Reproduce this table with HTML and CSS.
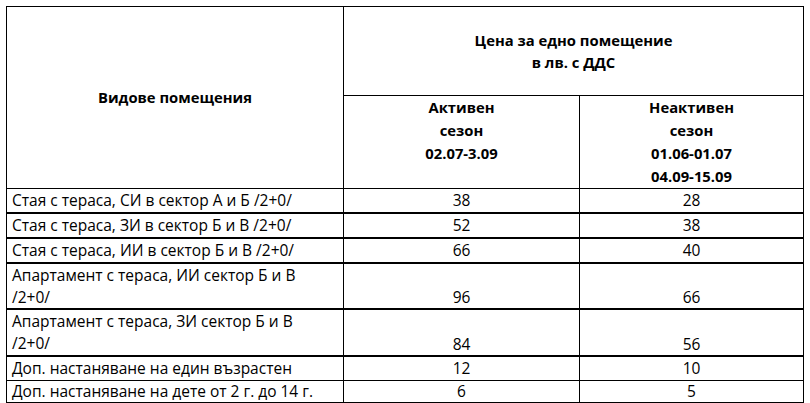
FILE: index.html
```html
<!DOCTYPE html>
<html lang="bg">
<head>
<meta charset="utf-8">
<title>Цени</title>
<link rel="stylesheet" href="styles.css">
</head>
<body>
<div class="page">
<table class="prices">
  <colgroup>
    <col class="c-type">
    <col class="c-active">
    <col class="c-inactive">
  </colgroup>
  <tr class="h1">
    <th rowspan="2" class="type-head">Видове помещения</th>
    <th colspan="2" class="price-head">Цена за едно помещение<br>в лв. с ДДС</th>
  </tr>
  <tr class="h2">
    <th class="season">Активен<br>сезон<br>02.07-3.09</th>
    <th class="season">Неактивен<br>сезон<br>01.06-01.07<br>04.09-15.09</th>
  </tr>
  <tr class="r r1 thin-top"><td>Стая с тераса, СИ в сектор А и Б /2+0/</td><td class="num">38</td><td class="num">28</td></tr>
  <tr class="r r2"><td>Стая с тераса, ЗИ в сектор Б и В /2+0/</td><td class="num">52</td><td class="num">38</td></tr>
  <tr class="r r3"><td>Стая с тераса, ИИ в сектор Б и В /2+0/</td><td class="num">66</td><td class="num">40</td></tr>
  <tr class="r r4 tall"><td>Апартамент с тераса, ИИ сектор Б и В<br>/2+0/</td><td class="num">96</td><td class="num">66</td></tr>
  <tr class="r r5 tall"><td>Апартамент с тераса, ЗИ сектор Б и В<br>/2+0/</td><td class="num">84</td><td class="num">56</td></tr>
  <tr class="r r6"><td>Доп. настаняване на един възрастен</td><td class="num">12</td><td class="num">10</td></tr>
  <tr class="r r7 thin-top"><td>Доп. настаняване на дете от 2 г. до 14 г.</td><td class="num">6</td><td class="num">5</td></tr>
</table>
</div>
</body>
</html>
```
FILE: styles.css
```css
html, body {
  margin: 0;
  padding: 0;
  background: #ffffff;
}
.page {
  padding: 6px 0 0 6px;
}
.prices {
  border-collapse: separate;
  border-spacing: 0;
  table-layout: fixed;
  width: 798px;
  border-right: 1px solid #000;
  border-bottom: 1px solid #000;
  font-family: "Open Sans", "Noto Sans", sans-serif;
  font-size: 15.5px;
  line-height: 23px;
  color: #000;
}
.c-type { width: 337px; }
.c-active { width: 236px; }
.c-inactive { width: 224px; }
.prices th,
.prices td {
  box-sizing: border-box;
  border-top: 1px solid #000;
  border-left: 1px solid #000;
  padding: 0 5px;
}
.prices th {
  font-weight: 700;
  font-size: 14.8px;
  text-align: center;
}
.type-head {
  vertical-align: middle;
  padding-top: 4px;
}
.price-head {
  vertical-align: middle;
  padding-top: 12px;
  line-height: 22px;
}
.season {
  vertical-align: top;
  padding-top: 0;
}
.h1 { height: 89px; }
.h2 { height: 92px; }
.prices td {
  border-top-width: 2px;
  vertical-align: middle;
  text-align: left;
  white-space: nowrap;
}
.prices td.num {
  text-align: center;
  vertical-align: bottom;
}
.prices .thin-top td { border-top-width: 1px; }
.r1 { height: 24px; }
.r2 { height: 23px; }
.r3 { height: 25px; }
.r4 { height: 46px; }
.r5 { height: 47px; }
.r6 { height: 24px; }
.r7 { height: 22px; }
.prices tr.r7 td { line-height: 21px; }
.prices .tall td { vertical-align: top; line-height: 22px; }
.prices .tall td.num { vertical-align: bottom; }
```
